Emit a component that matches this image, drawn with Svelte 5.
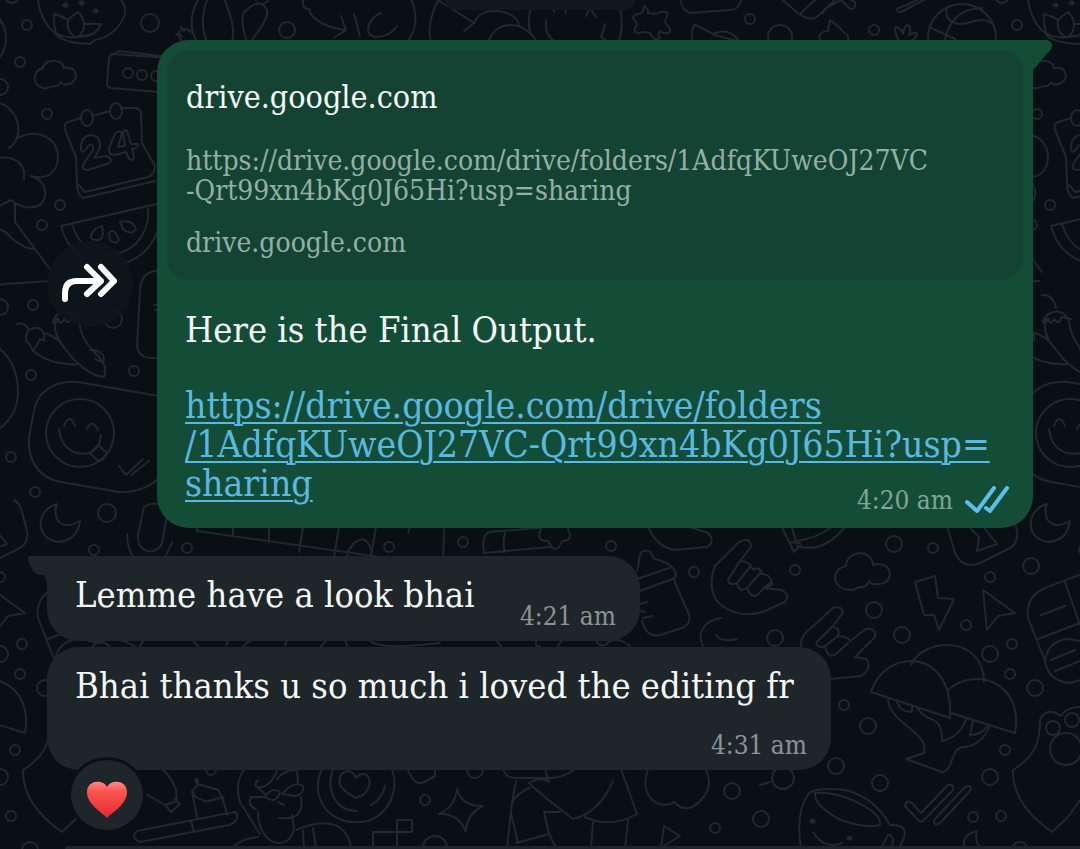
<script>
  const preview = {
    title: 'drive.google.com',
    lines: ['https://drive.google.com/drive/folders/1AdfqKUweOJ27VC', '-Qrt99xn4bKg0J65Hi?usp=sharing'],
    host: 'drive.google.com'
  };

  const linkLines = [
    'https://drive.google.com/drive/folders',
    '/1AdfqKUweOJ27VC-Qrt99xn4bKg0J65Hi?usp=',
    'sharing'
  ];
  const href = linkLines.join('');

  // loose rings of the wallpaper: x, y, radius
  const rings = [
    [27, 25, 5], [12, -3, 6], [150, 23, 9], [20, 62, 5], [0, 87, 8], [47, 114, 5], [60, 205, 5],
    [42, 225, 5], [287, 30, 8], [0, 307, 8], [33, 305, 5], [113, 319, 9], [31, 375, 5], [134, 371, 5],
    [11, 457, 5], [35, 492, 5], [107, 513, 9], [94, 550, 5], [187, 548, 5], [389, 547, 5], [463, 542, 5],
    [611, 546, 5], [0, 577, 5], [22, 644, 5], [0, 654, 8], [20, 674, 5], [45, 688, 8], [15, 750, 5],
    [0, 777, 8], [11, 816, 5], [30, 850, 8], [425, 800, 5], [694, 572, 5], [795, 570, 5], [894, 544, 8],
    [933, 548, 5], [874, 610, 8], [902, 635, 8], [966, 625, 5], [775, 638, 8], [1031, 566, 8],
    [844, 705, 5], [868, 726, 8], [836, 766, 8], [880, 783, 8], [783, 778, 11], [732, 791, 8],
    [761, 819, 8], [973, 817, 5], [715, 828, 5], [435, 848, 12], [475, 770, 8], [211, 770, 5],
    [750, 19, 5], [874, 30, 5], [780, 37, 12]
  ];
</script>

<main class="chat">
  <svg class="wallpaper" aria-hidden="true">
    <defs>
      <g id="doodles">
        {#each rings as [x, y, r]}
          <circle cx={x} cy={y} {r} />
        {/each}
        <!-- lotus bowl -->
        <path d="M38 -2C39 14 47 27 55 33Q61 43 90 44L95 40C110 37 120 28 125 14Q127 4 116 -5M56 33Q53 23 54 14Q62 16 68 20Q72 16 78 12Q84 18 84 24L101 24Q96 36 84 36Q66 40 56 33M68 20Q66 31 74 36M84 24Q84 33 78 37" />
        <path d="M65 5h1M81 3h1M95 11h1" class="dot" />
        <!-- clouds -->
        <path d="M43 88C31 85 33 70 43 68C43 60 61 57 64 68C78 65 80 82 68 84Q64 86 61 82Q59 87 53 86Q48 89 43 88Z" />
        <path d="M853 590C832 591 829 570 846 566C847 549 872 549 873 565C893 559 896 585 877 584Q872 585 869 581Q867 588 859 587Z" />
        <!-- radio box -->
        <path d="M170 58L113 54Q109 55 109 59L107 83Q107 87 111 88L170 93M110 56L119 51L170 57" />
        <circle cx="128" cy="73" r="5" /><circle cx="142" cy="75" r="5" /><circle cx="156" cy="76" r="5" />
        <!-- cactus -->
        <path d="M197 42C188 27 191 9 201 -4M207 42C200 26 203 8 208 -2M232 42C236 26 228 10 224 -2M247 42C242 28 240 12 247 10C260 -4 271 8 266 18C261 30 255 34 251 42M181 40C174 31 184 25 191 32M176 34l6 2M181 27l3 4M262 5l6-4M256 1l1-6" />
        <!-- dino head -->
        <path d="M302 -3L304 8L309 9C312 22 330 28 346 30L341 16M354 14L360 36M335 37L346 30" />
        <!-- calendar -->
        <path d="M81 118L68 122Q63 124 65 130L76 157L77 184Q77 194 83 198L155 181M92 116L110 111M121 108L136 108Q141 109 141 114L142 143L155 166Q155 174 148 177L85 192L79 185" />
        <ellipse cx="87" cy="118" rx="6" ry="8" /><ellipse cx="116" cy="111" rx="6" ry="8" />
        <path d="M81 150Q80 137 90 135Q101 136 100 146Q99 151 94 158L106 156Q113 158 110 163L88 170Q80 170 84 163L93 150Q94 142 88 146Q84 155 81 150ZM115 134L109 148Q108 155 115 155L126 152L129 159Q134 161 134 157L132 149Q139 148 138 144L131 144L127 131Q123 129 123 133L125 146L118 147L122 133Q119 129 115 134Z" />
        <!-- flower -->
        <path d="M-6 102C12 104 22 122 17 138Q15 144 9 148M16 139C36 127 58 137 58 158C57 174 46 180 31 176M31 176C48 181 48 197 40 205Q26 212 11 200L-5 208M-8 160C8 154 26 159 24 179" />
        <path d="M15 203V222L52 272M-6 228Q8 231 10 237Q14 240 18 243Q25 248 33 249M-6 285L49 281" />
        <!-- melon slice -->
        <path d="M61 226L165 202M61 226C67 249 82 262 108 265C137 266 156 245 160 222M72 224C80 250 98 256 115 254C137 250 150 230 148 209M91 235Q94 228 102 226Q105 241 96 240Q90 240 91 235ZM109 233Q114 227 119 240Q115 245 110 240ZM120 222Q132 219 136 229Q131 236 123 229Z" />
        <path d="M165 270L154 271Q141 274 140 290L137 345Q138 359 155 358L165 356M154 305h8M155 310h8" />
        <!-- chillies -->
        <path d="M17 324Q25 322 29 330C37 325 46 329 44 341Q40 336 37 345L33 351Q30 343 26 341C26 334 27 331 29 330M33 351Q52 366 78 364M44 333Q56 336 62 345M57 320Q50 331 67 351C77 365 92 376 104 377Q109 365 94 352Q80 338 79 320Q71 308 61 313Q54 315 53 323L58 318Q60 327 64 319Q70 326 71 317L81 319M66 308Q63 294 52 295M90 350Q96 349 103 355Q107 365 95 359" />
        <path d="M-5 346C8 353 18 369 18 392Q18 417 -5 432" />
        <!-- tongue sticker -->
        <path d="M170 398L78 382C53 380 37 393 34 411L29 437C27 466 44 479 61 482L119 492Q145 493 161 476" />
        <circle cx="80" cy="433" r="34" />
        <path d="M59 429C61 449 75 456 90 453Q100 449 101 435M64 426Q69 412 75 426M87 429Q92 418 98 430M90 453L98 445L107 453Q104 462 97 460ZM119 466L126 475L143 459M131 475l18-14" />
        <!-- moon -->
        <path d="M57 504C35 510 35 539 58 542Q77 541 80 521Q64 530 57 519Q54 510 57 504Z" />
        <!-- paper clip, ruler -->
        <path d="M166 515Q160 497 144 507L138 535C136 553 156 557 162 543L168 510M127 534Q127 550 136 561M172 542Q168 554 162 560M197 527V531L443 566L444 527M233 527V536M269 527V543M303 527L299 552M339 527L334 557M376 527L371 556M410 527L408 533M347 556Q351 541 363 539Q371 542 372 556" />
        <path d="M92 648Q99 636 110 647M120 640Q133 644 138 649M140 646l5-8M190 638l8 8M226 645l4-8M242 648Q250 638 260 638M285 645l3-7M320 647l10-10M345 640l3 8" />
        <!-- trowel, cake, bust -->
        <path d="M160 767Q172 777 176 790L177 801L165 805L146 794M165 805L171 812L180 804L175 799M197 818L192 791L198 785L195 780Q198 776 198 784L218 790Q224 799 227 815M193 792Q195 799 201 799Q206 803 212 800L224 797M137 831Q130 837 140 842L229 825Q240 821 236 812L224 814L137 831M191 821L194 832" />
        <path d="M244 770Q234 783 240 802L260 834M258 812C258 848 292 852 294 827L292 815M258 780Q254 784 256 786L265 794M265 797H251Q247 806 256 809M265 797Q272 786 280 792Q276 805 265 797M282 794Q294 780 303 786Q305 793 296 796L282 794M301 797Q305 821 279 818M278 802l6 3M257 787Q269 789 277 771M277 779Q285 769 297 770L298 784M296 830Q323 818 339 827Q350 835 351 848M303 830L304 848M313 828L316 848M232 848Q242 838 258 837" />
        <path d="M322 769C309 796 328 823 356 822C379 824 397 802 394 777L392 769M333 769C325 792 337 811 357 811M371 805Q382 799 385 786M340 785C336 771 352 766 356 778C366 766 377 783 363 795L356 798Q343 791 340 785Z" />
        <path d="M407 769L413 779Q417 785 424 782L435 776V769" />
        <!-- sparkle, tiles -->
        <path d="M457 789Q461 806 483 806Q466 814 466 832Q459 813 439 814Q455 807 457 789ZM373 848V832H397V820H412V832H397V848M397 832V848" />
        <!-- shirt -->
        <path d="M503 769Q506 778 516 778H540Q561 780 575 769M529 783Q540 794 573 819Q599 813 613 781M516 781L512 803L507 848M512 803Q516 794 529 788M529 783Q540 776 549 782L545 769M560 812H544L549 834L516 843M549 834L556 848M585 817Q610 829 637 814L621 769M593 822L591 848M628 820L625 848M511 813L518 843" />
        <!-- apple, cursor -->
        <path d="M648 769C637 801 664 810 674 802Q687 815 700 801C715 786 707 774 706 769M661 848L664 826L680 836L664 846" />
        <path d="M760 785L770 782" />
        <!-- cup -->
        <path d="M801 848Q795 812 809 793Q818 787 846 790Q875 798 890 825Q908 824 904 838L899 848M815 793Q838 791 866 807Q882 817 880 825Q868 829 841 820Q814 806 815 793M813 832Q824 850 842 843M881 848L888 835Q895 834 892 848" />
        <path d="M812 821h1M849 838h1" class="dot" />
        <!-- double tick -->
        <path d="M905 806Q906 799 912 803L921 813L948 785Q955 784 953 790L924 820Q921 824 917 819ZM934 820L965 787Q973 784 970 791L941 822Q934 828 934 820Z" />
        <path d="M965 848Q960 836 977 831Q974 844 982 848" />
        <!-- paw shield -->
        <path d="M1080 707Q1066 707 1061 716Q1046 706 1040 720C1040 742 1036 755 1013 770Q1012 804 1052 832L1067 818L1084 795" />
        <circle cx="1053" cy="728" r="7" /><circle cx="1072" cy="720" r="7" /><circle cx="1066" cy="749" r="16" />
        <!-- capsule cards -->
        <path d="M1090 571L1045 588Q1025 597 1028 618L1045 661M1038 639L1090 619M1065 582L1080 625M1041 615l24-9M1045 661Q1048 681 1070 683L1090 677M1045 661Q1048 640 1069 639L1090 643M1051 660l24-10M1055 671l25-10" />
        <!-- mushrooms -->
        <path d="M911 665C923 637 984 635 984 682M871 692C885 647 954 647 950 718ZM948 690C977 665 1024 684 1015 733L951 713M888 700C891 725 930 732 924 753L906 759L942 772C954 772 950 745 965 747Q983 744 989 727M918 709C929 725 942 713 942 741Q960 737 966 719M897 702Q900 712 912 712V706M973 721L970 735Q982 735 987 726" />
        <!-- bolt, pointer -->
        <path d="M915 582L935 576L938 598L954 599L939 630L934 615L924 615ZM983 590L1015 613L998 616L987 630Z" />
        <!-- hands -->
        <path d="M715 566L739 542Q751 536 751 547L740 561Q750 561 753 570Q760 565 761 574Q771 573 772 585L763 588L781 590Q791 594 785 602L765 611C745 619 723 611 715 598Q708 583 715 566M740 561L728 580Q729 586 737 583L750 567M737 583Q739 593 747 588L762 571M747 588Q753 602 761 591L771 582" />
        <path d="M801 646Q800 636 811 628L833 608Q842 605 843 613L832 627Q841 628 838 636Q849 637 850 641L866 629Q876 627 875 637L855 657L866 659Q873 668 861 676L831 679M832 627L816 643Q818 649 825 646L838 636M825 646Q828 660 836 654L848 643" />
        <!-- tag with a bolt, balloon, bone, plaster -->
        <path d="M1004 500Q1010 503 1012 512L1017 531Q1019 544 1008 549L980 563Q963 570 955 553L947 526M971 529L979 537L977 551L997 544L985 529M782 527L789 542L794 552L801 545M792 528L796 541Q815 539 832 527M797 546Q823 554 845 527M789 542L800 543" />
        <path d="M648 527Q658 548 675 550L707 547Q716 542 708 533L690 527M484 553Q481 536 489 532L539 528M484 553L550 547M505 533Q502 543 505 552M541 529Q535 541 548 541Q556 557 562 541Q574 541 568 529" />
        <!-- baby bottle -->
        <path d="M637 571Q639 565 639 559Q641 547 651 552Q653 559 655 559Q667 562 672 567Q678 573 675 578L640 591M637 579L672 567M673 578L687 610Q694 622 682 628L660 635Q646 638 642 620M640 604l7-2M640 611l5 1M643 618l9-2" />
        <path d="M721 618C702 621 696 635 704 648M737 639Q722 643 716 635" />
        <path d="M370 641Q380 650 440 643M494 638l7 8M536 640Q535 648 540 646M558 646l5-8M596 640Q601 650 609 642Q618 636 630 646" />
        <!-- top strip -->
        <path d="M410 -3C418 14 417 30 407 42M381 13C368 18 363 35 375 37Q390 37 397 26M439 -2C430 16 428 31 431 42M438 0L474 23L464 31M474 23Q479 11 493 11C512 11 519 20 519 26M489 40Q494 27 508 25Q525 24 536 40M531 8Q527 19 530 31M546 20Q544 36 556 42M554 8v4M564 8l2 5M586 16L590 8L596 17M620 8Q624 27 619 40M605 24Q604 31 601 37L608 42" />
        <path d="M644 6Q649 9 648 13Q656 15 660 12Q668 11 668 15Q664 20 666 24Q672 29 669 33Q663 34 660 31Q657 35 660 38Q654 42 650 33Q643 31 640 33Q633 33 635 28Q639 24 634 20Q631 15 638 14Q644 14 644 6Z" />
        <path d="M680 -3Q681 10 690 13L730 10Q739 10 741 0M692 42Q691 27 695 25Q706 30 715 35L740 42M713 34Q729 27 738 40M779 -3L799 14Q811 22 818 16L837 -2M801 13L819 -4M823 13l2-4L841 0L849 8Q856 11 855 2L840 -5M897 9L924 -3M897 9Q897 14 903 11L929 -3M820 40Q817 32 828 31L830 20Q841 28 844 33Q849 34 848 40M899 42Q893 28 896 27Q901 28 903 34Q904 26 908 25Q912 28 909 35Q915 31 917 34Q916 39 909 42" />
        <!-- ball -->
        <circle cx="962" cy="38" r="34" />
        <path d="M947 7C943 22 957 27 971 22Q986 17 992 24M982 8Q951 9 945 40M929 27L955 39" />
      </g>
    </defs>
    <use href="#doodles" />
    <use href="#doodles" x="990" />
    <use href="#doodles" x="-990" />
  </svg>

  <div class="chip"></div>

  <div class="row">
    <button class="forward" aria-label="Forward">
      <svg viewBox="0 0 86 86" width="86" height="86">
        <path d="M18 58V52Q18 40 30 40H54M40 26L54 40L40 53M54 26L67 40L54 53" />
      </svg>
    </button>
    <article class="bubble green">
      <svg class="tail" viewBox="0 0 32 32" width="32" height="32" aria-hidden="true">
        <path d="M12 0H26Q34 3 30 9L12 30Z" />
      </svg>
      <section class="preview">
        <h2>{preview.title}</h2>
        <p>{preview.lines[0]}<br />{preview.lines[1]}</p>
        <small>{preview.host}</small>
      </section>
      <p class="text">Here is the Final Output.</p>
      <p class="link"><a {href}>{linkLines[0]}<br />{linkLines[1]}<br />{linkLines[2]}</a></p>
      <footer class="meta">
        <time>4:20 am</time>
        <svg viewBox="0 0 44 28" width="44" height="28" role="img" aria-label="Read">
          <path d="M2 16L12 25L29 2M21 22L25 25L42 2" />
        </svg>
      </footer>
    </article>
  </div>

  <article class="bubble grey first">
    <svg class="tail" viewBox="0 0 32 32" width="32" height="32" aria-hidden="true">
      <path d="M32 0H3Q-2 1 1 7L5 14Q9 18 14 18Q19 20 19 32H32Z" />
    </svg>
    <p class="text">Lemme have a look bhai</p>
    <time>4:21 am</time>
  </article>

  <article class="bubble grey second">
    <p class="text">Bhai thanks u so much i loved the editing fr</p>
    <time>4:31 am</time>
    <button class="reaction" aria-label="Heart reaction">
      <svg viewBox="0 0 42 38" width="42" height="38">
        <defs>
          <linearGradient id="heart" x1="0" y1="0" x2="0" y2="1">
            <stop offset="0" stop-color="#ff8d85" />
            <stop offset="0.25" stop-color="#fb5551" />
            <stop offset="1" stop-color="#e5292e" />
          </linearGradient>
        </defs>
        <path d="M21 37C17 32 1 24 1 11C1 -1 17 -2 21 6C25 -2 41 -1 41 11C41 24 25 32 21 37Z" fill="url(#heart)" />
      </svg>
    </button>
  </article>

  <div class="next"></div>
</main>

<style>
  :global(body) {
    margin: 0;
    background: #0a0f13;
  }

  .chat {
    position: relative;
    display: flex;
    flex-direction: column;
    align-items: flex-start;
    min-height: 100vh;
    box-sizing: border-box;
    overflow: hidden;
    color: #f4f8f7;
    font-family: "DejaVu Serif Condensed", "DejaVu Serif", serif;
  }

  .wallpaper {
    position: absolute;
    inset: 0;
    width: 100%;
    height: 100%;
    fill: none;
    stroke: #22282c;
    stroke-width: 2;
    stroke-linecap: round;
    stroke-linejoin: round;
  }

  .dot { stroke-width: 5; }

  h2, p { margin: 0; font-weight: normal; }

  button {
    padding: 0;
    border: 0;
    cursor: pointer;
  }

  .chip {
    position: relative;
    align-self: center;
    width: 190px;
    height: 10px;
    border-radius: 0 0 12px 12px;
    background: #12181c;
  }

  .row {
    position: relative;
    display: flex;
    align-items: center;
    gap: 24px;
    align-self: stretch;
    margin: 30px 47px 28px;
  }

  .forward {
    flex: none;
    width: 86px;
    height: 86px;
    border-radius: 50%;
    background: #0e161ce6;
  }

  .forward svg {
    display: block;
    fill: none;
    stroke: #fff;
    stroke-width: 6;
    stroke-linecap: round;
    stroke-linejoin: round;
  }

  .bubble {
    position: relative;
    box-sizing: border-box;
    border-radius: 32px;
  }

  .green {
    flex: 1;
    padding: 10px;
    border-top-right-radius: 0;
    background: #144d37;
  }

  .green .tail {
    position: absolute;
    top: 0;
    right: -20px;
    fill: #144d37;
  }

  .preview {
    display: flex;
    flex-direction: column;
    gap: 22px;
    height: 230px;
    box-sizing: border-box;
    padding: 28px 19px;
    border-radius: 22px;
    background: #144333;
  }

  h2 {
    margin-bottom: 8px;
    font-size: 32px;
    line-height: 38px;
  }

  .preview p, small {
    font-size: 28px;
    line-height: 30px;
    color: #93b0a6;
    white-space: nowrap;
  }

  .text {
    font-size: 36px;
    line-height: 38px;
    white-space: nowrap;
  }

  .link {
    font-size: 37px;
    line-height: 39px;
    white-space: nowrap;
  }

  .green .text { margin: 31px 18px 0; }
  .green .link { margin: 37px 18px 0; }

  a {
    color: #5ab9e0;
    text-decoration-thickness: 2px;
    text-underline-offset: 4px;
  }

  time {
    font-size: 26px;
    line-height: 28px;
    color: #8b9497;
    white-space: nowrap;
  }

  .meta {
    display: flex;
    justify-content: flex-end;
    align-items: center;
    gap: 12px;
    margin: -17px 14px 4px;
  }

  .meta time { color: #85a398; }

  .meta svg {
    fill: none;
    stroke: #5ac0ea;
    stroke-width: 4;
    stroke-linecap: round;
    stroke-linejoin: round;
  }

  .grey {
    display: flex;
    justify-content: space-between;
    margin-left: 47px;
    padding: 20px 24px 11px 28px;
    background: #1f2629;
  }

  .grey time { align-self: flex-end; }

  .first {
    width: calc(100% - 487px);
    height: 85px;
    border-top-left-radius: 0;
  }

  .first .tail {
    position: absolute;
    top: 0;
    left: -19px;
    fill: #1f2629;
  }

  .second {
    flex-direction: column;
    width: calc(100% - 296px);
    height: 123px;
    margin-top: 6px;
  }

  .reaction {
    position: absolute;
    left: 21px;
    bottom: -63px;
    display: grid;
    place-items: center;
    width: 78px;
    height: 76px;
    padding-top: 10px;
    border: 3px solid #0a0f13;
    border-radius: 50%;
    background: #1f2629;
  }

  .next {
    position: relative;
    align-self: stretch;
    height: 3px;
    margin: auto 0 0 65px;
    border-radius: 3px 0 0 0;
    background: #1f2629;
  }
</style>
